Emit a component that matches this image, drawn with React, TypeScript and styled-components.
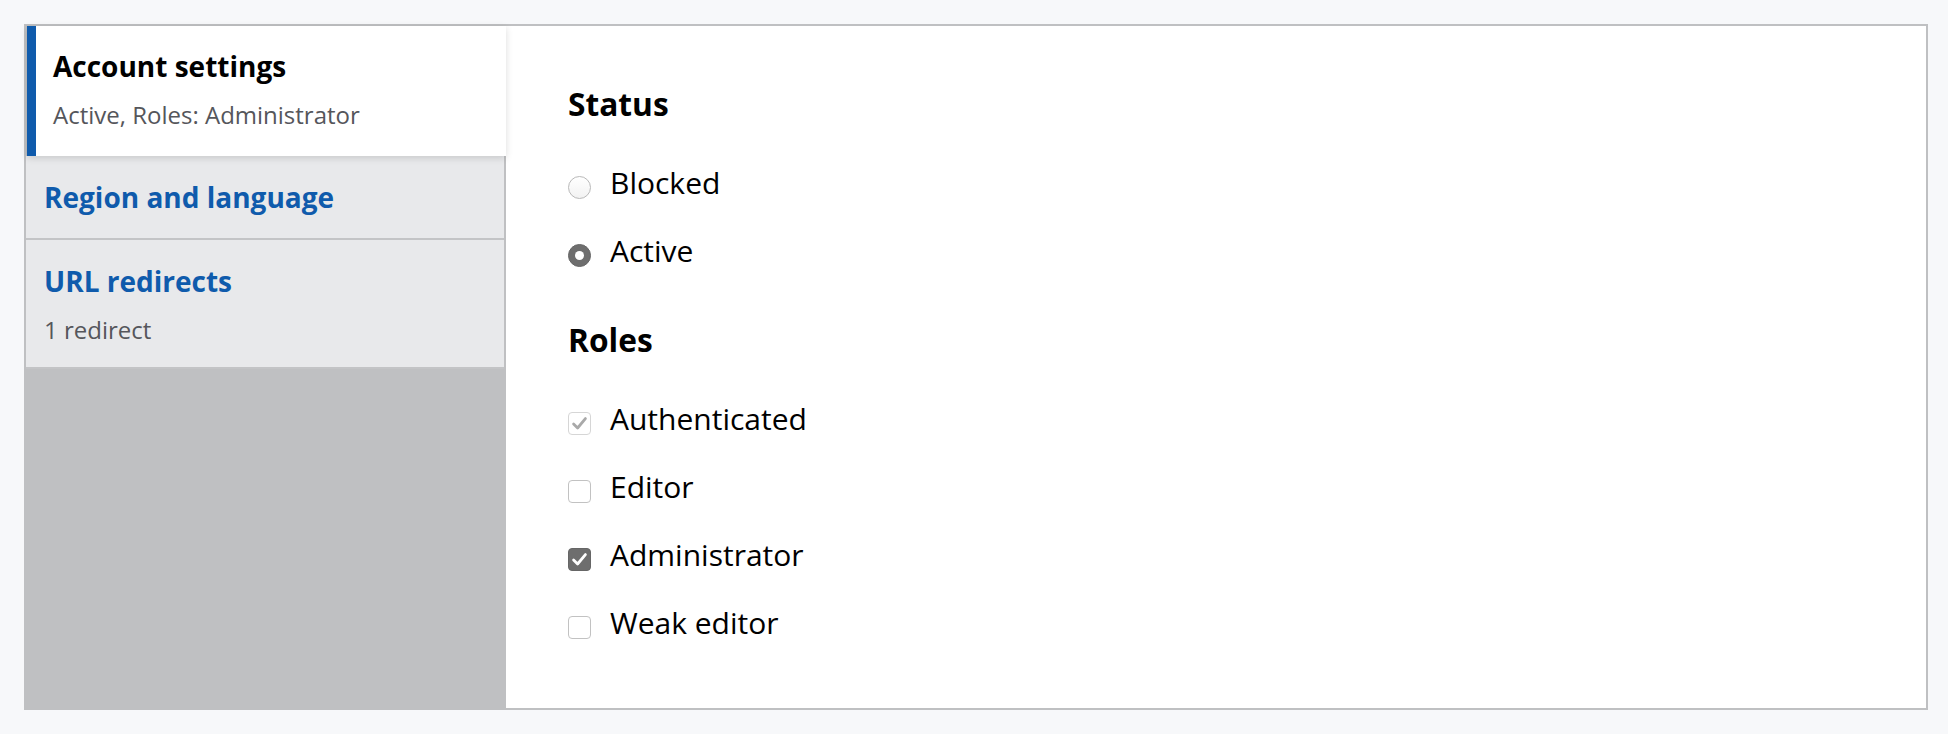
import React from "react";
import styled, { createGlobalStyle } from "styled-components";

const GlobalStyle = createGlobalStyle`
  html, body { margin: 0; padding: 0; }
  body {
    background: #f7f8fa;
    font-family: "Open Sans", "Liberation Sans", sans-serif;
    color: #000;
  }
`;

const Page = styled.div`
  padding: 24px 20px 24px 24px;
`;

const Frame = styled.div`
  display: flex;
  width: 1904px;
  height: 686px;
  box-sizing: border-box;
  border: 2px solid #bfc0c2;
  background: #fff;
`;

const Sidebar = styled.nav`
  width: 480px;
  flex: none;
  box-sizing: border-box;
  border-right: 2px solid #bfc0c2;
  background: #bfc0c2;
  display: flex;
  flex-direction: column;
`;

const Tab = styled.div<{ $active?: boolean }>`
  position: relative;
  padding: 21px 18px 21px 18px;
  background: #e8e9eb;
  border-bottom: 2px solid #c3c4c6;
  ${(p) =>
    p.$active &&
    `
    z-index: 1;
    background: #fff;
    border-bottom: none;
    border-left: 9px solid #0f5bac;
    margin-left: 1px;
    margin-right: -2px;
    padding: 20px 18px 25px 17px;
    box-shadow: 0 2px 7px rgba(0, 0, 0, 0.14);
  `}
`;

const TabTitle = styled.div<{ $active?: boolean }>`
  font-size: 28px;
  line-height: 40px;
  font-weight: 700;
  color: ${(p) => (p.$active ? "#000" : "#0f5bac")};
`;

const TabSummary = styled.div`
  margin-top: 13px;
  font-size: 24px;
  line-height: 32px;
  color: #55565b;
`;

const Content = styled.main`
  flex: 1;
  padding: 58px 62px 0 62px;
  display: flex;
  flex-direction: column;
  gap: 49px;
`;

const Fieldset = styled.section`
  display: flex;
  flex-direction: column;
`;

const Legend = styled.h2`
  margin: 0 0 39px 0;
  font-size: 31.7px;
  line-height: 40px;
  font-weight: 700;
`;

const OptionList = styled.div<{ $gap: number }>`
  display: flex;
  flex-direction: column;
  gap: ${(p) => p.$gap}px;
`;

const Option = styled.label`
  display: flex;
  align-items: flex-start;
  gap: 19px;
  font-size: 30px;
  line-height: 40px;
  color: #000;
`;

const RadioMark = styled.span<{ $checked?: boolean }>`
  flex: none;
  margin-top: 13px;
  width: 23px;
  height: 23px;
  box-sizing: border-box;
  border-radius: 50%;
  display: flex;
  align-items: center;
  justify-content: center;
  ${(p) =>
    p.$checked
      ? `background: #6e6e6e; border: 1px solid #666;`
      : `background: linear-gradient(#fff, #f2f2f2); border: 1px solid #b9b9b9;`}
`;

const RadioDot = styled.span`
  width: 9px;
  height: 9px;
  border-radius: 50%;
  background: #fff;
`;

const BoxMark = styled.span<{ $checked?: boolean; $disabled?: boolean }>`
  flex: none;
  margin-top: 13px;
  width: 23px;
  height: 23px;
  box-sizing: border-box;
  border-radius: 4px;
  display: flex;
  align-items: center;
  justify-content: center;
  ${(p) =>
    p.$checked && !p.$disabled
      ? `background: #6e6e6e; border: 1px solid #666;`
      : `background: #fff; border: 1px solid ${p.$disabled ? "#d6d6d6" : "#c2c2c2"};`}
`;

function Radio({ checked, label }: { checked?: boolean; label: string }) {
  return (
    <Option>
      <RadioMark $checked={checked}>{checked && <RadioDot />}</RadioMark>
      {label}
    </Option>
  );
}

function Checkbox({
  checked,
  disabled,
  label,
}: {
  checked?: boolean;
  disabled?: boolean;
  label: string;
}) {
  return (
    <Option>
      <BoxMark $checked={checked} $disabled={disabled}>
        {checked && (
          <svg width="19" height="19" viewBox="0 0 19 19">
            <path
              d="M3.6 10 L7.6 14 L15.4 4.6"
              fill="none"
              stroke={disabled ? "#a9a9a9" : "#fff"}
              strokeWidth="2.8"
              strokeLinecap="round"
              strokeLinejoin="round"
            />
          </svg>
        )}
      </BoxMark>
      {label}
    </Option>
  );
}

export default function App() {
  return (
    <>
      <GlobalStyle />
      <Page>
        <Frame>
          <Sidebar>
            <Tab $active>
              <TabTitle $active>Account settings</TabTitle>
              <TabSummary>Active, Roles: Administrator</TabSummary>
            </Tab>
            <Tab>
              <TabTitle>Region and language</TabTitle>
            </Tab>
            <Tab>
              <TabTitle>URL redirects</TabTitle>
              <TabSummary>1 redirect</TabSummary>
            </Tab>
          </Sidebar>
          <Content>
            <Fieldset>
              <Legend>Status</Legend>
              <OptionList $gap={28}>
                <Radio label="Blocked" />
                <Radio label="Active" checked />
              </OptionList>
            </Fieldset>
            <Fieldset>
              <Legend>Roles</Legend>
              <OptionList $gap={28}>
                <Checkbox label="Authenticated" checked disabled />
                <Checkbox label="Editor" />
                <Checkbox label="Administrator" checked />
                <Checkbox label="Weak editor" />
              </OptionList>
            </Fieldset>
          </Content>
        </Frame>
      </Page>
    </>
  );
}
